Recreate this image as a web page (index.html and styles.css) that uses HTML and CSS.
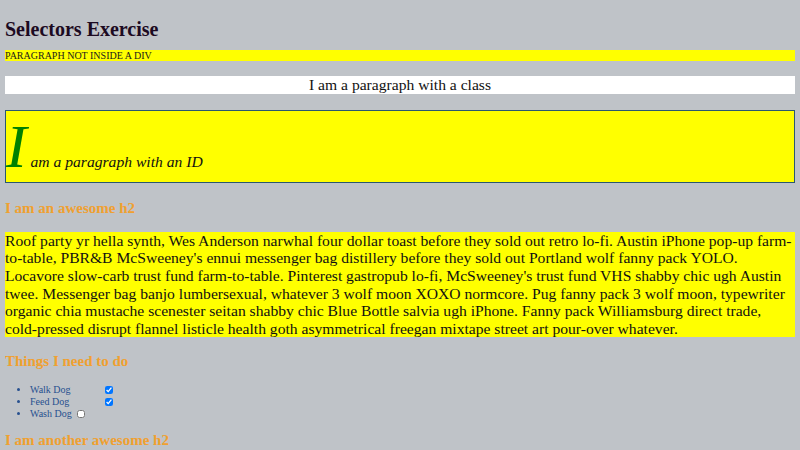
FILE: index.html
```html
<!DOCTYPE html>
<html lang="en">
<head>
<meta charset="utf-8">
<title>Selectors Exercise</title>
<link rel="stylesheet" href="styles.css">
</head>
<body>
<h1 class="title">Selectors Exercise</h1>
<p class="loose">Paragraph not inside a div</p>
<div class="content">
  <p class="classy">I am a paragraph with a class</p>
  <p class="identified">I am a paragraph with an ID</p>
  <h2 class="awesome">I am an awesome h2</h2>
  <p class="lorem">Roof party yr hella synth, Wes Anderson narwhal four dollar toast before they sold out retro lo-fi. Austin iPhone pop-up farm-to-table, PBR&amp;B McSweeney's ennui messenger bag distillery before they sold out Portland wolf fanny pack YOLO. Locavore slow-carb trust fund farm-to-table. Pinterest gastropub lo-fi, McSweeney's trust fund VHS shabby chic ugh Austin twee. Messenger bag banjo lumbersexual, whatever 3 wolf moon XOXO normcore. Pug fanny pack 3 wolf moon, typewriter organic chia mustache scenester seitan shabby chic Blue Bottle salvia ugh iPhone. Fanny pack Williamsburg direct trade, cold-pressed disrupt flannel listicle health goth asymmetrical freegan mixtape street art pour-over whatever.</p>
  <h2 class="awesome">Things I need to do</h2>
  <ul class="todo">
    <li><span class="task wide">Walk Dog</span> <input type="checkbox" checked></li>
    <li><span class="task wide">Feed Dog</span> <input type="checkbox" checked></li>
    <li><span class="task">Wash Dog</span> <input type="checkbox"></li>
  </ul>
  <h2 class="awesome">I am another awesome h2</h2>
</div>
</body>
</html>
```

FILE: styles.css
```css
html {
  background: #bfc3c8;
}
body {
  margin: 5px;
  font-family: "Liberation Serif", "Times New Roman", serif;
  font-size: 10px;
}
.title {
  font-size: 20px;
  margin: 13.4px 0 8.4px;
  color: #1c0a22;
}
.loose {
  margin: 8px 0;
  background: #ffff00;
  text-transform: uppercase;
  color: #1a1a1a;
}
.classy {
  font-size: 15.625px;
  margin: 15px 0;
  background: #ffffff;
  text-align: center;
  color: #111;
}
.identified {
  font-size: 15.625px;
  margin: 16px 0 17px;
  background: #ffff00;
  border: 1px solid #2a5870;
  font-style: italic;
  color: #111;
}
.identified::first-letter {
  font-size: 62px;
  color: #008000;
}
.awesome {
  font-size: 15px;
  font-weight: bold;
  margin: 12.5px 0;
  color: #f0a030;
}
.lorem {
  font-size: 15.625px;
  line-height: 17.6px;
  margin: 15px 0 16px;
  background: #ffff00;
  color: #111;
}
.todo {
  margin: 13.5px 0 10px;
  padding-left: 25px;
  color: #27508f;
  font-size: 10px;
}
.todo li {
  line-height: 12px;
}
.task.wide {
  display: inline-block;
  width: 69px;
}
.todo input {
  width: 8px;
  height: 8px;
  margin: 2px 2px 2px 3px;
  vertical-align: -1px;
}
```
